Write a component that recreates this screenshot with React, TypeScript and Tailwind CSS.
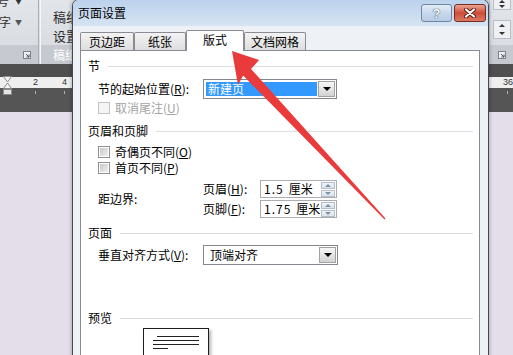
import React from "react";

function Accel({ k }: { k: string }) {
  return (
    <>
      (<span className="underline">{k}</span>)
    </>
  );
}

function Heading({ label, className = "" }: { label: string; className?: string }) {
  return (
    <div className={`flex items-center h-[14px] ${className}`}>
      <span className="leading-none">{label}</span>
      <div className="flex-1 h-px bg-[#dadee3] ml-[8px]" />
    </div>
  );
}

function Check({
  label,
  k,
  disabled = false,
  className = "",
}: {
  label: string;
  k: string;
  disabled?: boolean;
  className?: string;
}) {
  return (
    <div className={`flex items-center h-[14px] ml-[10px] ${className}`}>
      {disabled ? (
        <div className="w-[12px] h-[12px] border border-[#c4c4c4] bg-[#f5f5f5]" />
      ) : (
        <div className="w-[12px] h-[12px] border border-[#8e8f8f] p-px bg-white">
          <div className="w-full h-full bg-linear-to-br from-[#c8c8c8] to-[#f0f0f0]" />
        </div>
      )}
      <span className={`ml-[5px] leading-none ${disabled ? "text-[#a3a3a3]" : ""}`}>
        {label}
        <Accel k={k} />
      </span>
    </div>
  );
}

function Select({ value, selected = false, width }: { value: string; selected?: boolean; width: string }) {
  return (
    <div className={`${width} h-[20px] border border-[#828790] bg-white flex p-px`}>
      <div
        className={`flex-1 m-px flex items-center px-[2px] leading-none ${
          selected ? "bg-[#3399ff] text-white" : "pl-[4px]"
        }`}
      >
        {value}
      </div>
      <div className="w-[17px] h-full border border-[#a2a2a2] bg-linear-to-b from-[#f7f7f7] to-[#d3d3d3] flex items-center justify-center">
        <div className="w-0 h-0 border-l-[4px] border-r-[4px] border-t-[4px] border-l-transparent border-r-transparent border-t-black" />
      </div>
    </div>
  );
}

function SpinArrow({ up }: { up: boolean }) {
  return (
    <div className="flex-1 border border-[#b4bdc9] bg-linear-to-b from-[#f1f4f8] to-[#dce3ec] flex items-center justify-center">
      <div
        className={`w-0 h-0 border-l-[3px] border-r-[3px] border-l-transparent border-r-transparent ${
          up ? "border-b-[3px] border-b-[#7f8fa3]" : "border-t-[3px] border-t-[#7f8fa3]"
        }`}
      />
    </div>
  );
}

function Spin({ num, label, k }: { num: string; label: string; k: string }) {
  return (
    <div className="flex items-center h-[18px]">
      <span className="w-[57px] leading-none">
        {label}
        <Accel k={k} />:
      </span>
      <div className="w-[77px] h-[18px] border border-[#abadb3] bg-white flex items-center pl-[3px] pr-px">
        <span className="flex-1 leading-none">
          <span className="tracking-[1px]">{num}</span>
          <span className="ml-[5px]">厘米</span>
        </span>
        <div className="w-[14px] h-[15px] flex flex-col gap-px">
          <SpinArrow up />
          <SpinArrow up={false} />
        </div>
      </div>
    </div>
  );
}

function Launcher() {
  return (
    <svg width="8" height="8" viewBox="0 0 8 8">
      <rect x="0.5" y="0.5" width="7" height="7" fill="#eef0f2" stroke="#7d838b" />
      <path d="M3 3 L6 6 M6 3.5 V6 H3.5" stroke="#4b5057" fill="none" />
    </svg>
  );
}

function SpinControl({ className = "" }: { className?: string }) {
  return (
    <div
      className={`w-[18px] bg-[#eef0f3] border border-[#b9bec5] flex flex-col items-center justify-around ${className}`}
    >
      <div className="w-0 h-0 border-l-[3px] border-r-[3px] border-b-[3px] border-l-transparent border-r-transparent border-b-[#333]" />
      <div className="w-0 h-0 border-l-[3px] border-r-[3px] border-t-[3px] border-l-transparent border-r-transparent border-t-[#333]" />
    </div>
  );
}

function WordBackground() {
  return (
    <div className="absolute inset-0 flex flex-col">
      <div className="h-[64px] bg-linear-to-b from-[#e2e5e9] to-[#d6dae0] flex justify-between">
        <div className="flex">
          <div className="w-[38px] flex flex-col">
            <div className="flex-1 flex flex-col text-[#333] text-[12px] leading-[12px]">
              <div className="flex items-center -mt-[5px] -ml-[3px]">
                <span>号</span>
                <span className="ml-[6px] text-[7px]">▼</span>
              </div>
              <div className="flex items-center mt-[9px] -ml-[1px]">
                <span>字</span>
                <span className="ml-[4px] text-[7px] text-[#555]">▼</span>
              </div>
            </div>
            <div className="h-[19px] bg-[#c6cad0] flex items-center justify-end pr-[7px]">
              <Launcher />
            </div>
          </div>
          <div className="w-[3px] border-l border-[#a9aeb5] border-r border-r-[#f6f7f9]" />
          <div className="w-[40px] flex flex-col">
            <div className="flex-1 pl-[12px] pt-[7px] text-[13px] leading-[19px] text-[#2b2b2b]">
              稿纸
              <br />
              设置
            </div>
            <div className="h-[19px] bg-[#c6cad0] pl-[12px] flex items-center text-white text-[12px]">稿纸</div>
          </div>
        </div>
        <div className="w-[24px] flex flex-col items-center border-l border-[#c4c8ce]">
          <SpinControl className="h-[12px] -mt-[2px]" />
          <SpinControl className="h-[19px] mt-[10px]" />
          <div className="mt-auto h-[19px] w-full bg-[#c6cad0] flex items-center justify-center">
            <Launcher />
          </div>
        </div>
      </div>
      <div className="h-[13px] bg-[#4f4f4f]" />
      <div className="h-[11px] bg-[#efefef] relative flex items-center text-[9px] leading-none text-[#333] font-['Liberation_Sans',sans-serif]">
        <span className="ml-[33px]">2</span>
        <span className="ml-[24px]">4</span>
        <span className="ml-auto mr-0">36</span>
        <svg className="absolute left-[3px] top-[-1px]" width="9" height="20" viewBox="0 0 9 20">
          <path d="M0.5 0.5 H8.5 L4.5 6 Z" fill="#f5f5f5" stroke="#8a8a8a" />
          <path d="M4.5 7 L8.5 12.5 H0.5 Z" fill="#f5f5f5" stroke="#8a8a8a" />
          <rect x="0.5" y="13.5" width="8" height="5" fill="#e6e6e6" stroke="#8a8a8a" />
        </svg>
      </div>
      <div className="h-[24px] bg-[#555555] flex items-start">
        <span className="ml-[35px] mt-[3px] w-px h-[3px] bg-[#b0b0b0]" />
        <span className="ml-[28px] mt-[3px] w-px h-[3px] bg-[#b0b0b0]" />
        <span className="ml-auto mr-[5px] mt-[3px] w-px h-[3px] bg-[#b0b0b0]" />
      </div>
      <div className="flex-1 bg-[#e4deeb]" />
    </div>
  );
}

function TitleButtons() {
  return (
    <div className="flex gap-[2px]">
      <div className="w-[31px] h-[18px] rounded-[3px] border border-[#6f87a5] bg-linear-to-b from-[#e3ecf6] via-[#c9d9ec] to-[#b7cbe4] flex items-center justify-center">
        <span className="text-white font-bold text-[13px] leading-none font-['Liberation_Sans',sans-serif] [text-shadow:0_0_1px_#2d3d52,0_0_1px_#2d3d52]">
          ?
        </span>
      </div>
      <div className="w-[32px] h-[18px] rounded-[3px] border border-[#7a2b20] bg-linear-to-b from-[#eaa596] via-[#cd4c36] to-[#dc7a66] flex items-center justify-center">
        <svg width="14" height="10" viewBox="0 0 14 10">
          <path d="M3 1.5 L11 8.5 M11 1.5 L3 8.5" stroke="#5a1c14" strokeWidth="4" strokeLinecap="round" />
          <path d="M3 1.5 L11 8.5 M11 1.5 L3 8.5" stroke="#ffffff" strokeWidth="2.2" strokeLinecap="round" />
        </svg>
      </div>
    </div>
  );
}

function Tab({ label, width, active = false }: { label: string; width: string; active?: boolean }) {
  return active ? (
    <div
      className={`${width} h-[21px] -mb-px relative z-10 border border-b-0 border-[#898c95] rounded-t-[2px] bg-white flex items-center justify-center pb-[2px]`}
    >
      {label}
    </div>
  ) : (
    <div
      className={`${width} h-[18px] border border-b-0 border-[#898c95] rounded-t-[2px] bg-linear-to-b from-[#f3f3f3] to-[#dedede] flex items-center justify-center`}
    >
      {label}
    </div>
  );
}

function PageSetupDialog() {
  return (
    <div className="absolute left-[72px] top-[-1px] w-[417px] h-[372px] border border-[#3f4957] rounded-t-[7px] bg-[#eef2f6] flex flex-col shadow-[0_0_4px_rgba(0,0,0,0.35)] overflow-hidden">
      <div className="h-[26px] shrink-0 bg-linear-to-b from-[#bcd2ec] to-[#d6e4f3] flex items-center justify-between pl-[5px] pr-[2px]">
        <span className="text-[12px] leading-none text-black">页面设置</span>
        <TitleButtons />
      </div>
      <div className="flex-1 flex flex-col pl-[7px] pr-[8px]">
        <div className="h-[20px] mt-[4px] flex items-end">
          <Tab label="页边距" width="w-[54px]" />
          <Tab label="纸张" width="w-[52px]" />
          <Tab label="版式" width="w-[58px]" active />
          <Tab label="文档网格" width="w-[62px]" />
        </div>
        <div className="flex-1 border border-[#898c95] bg-white pl-[7px] pr-[6px] pt-[8px] flex flex-col text-black">
          <Heading label="节" />
          <div className="flex items-center h-[20px] mt-[6px] ml-[10px]">
            <span className="w-[105px] leading-none">
              节的起始位置<Accel k="R" />:
            </span>
            <Select value="新建页" selected width="w-[134px]" />
          </div>
          <Check label="取消尾注" k="U" disabled className="mt-[2px]" />

          <Heading label="页眉和页脚" className="mt-[9px]" />
          <Check label="奇偶页不同" k="O" className="mt-[7px]" />
          <Check label="首页不同" k="P" className="mt-[2px]" />
          <div className="flex items-center mt-[5px] ml-[10px]">
            <span className="w-[105px] leading-none">距边界:</span>
            <div className="flex flex-col gap-[2px]">
              <Spin label="页眉" k="H" num="1.5" />
              <Spin label="页脚" k="F" num="1.75" />
            </div>
          </div>

          <Heading label="页面" className="mt-[8px]" />
          <div className="flex items-center h-[20px] mt-[5px] ml-[10px]">
            <span className="w-[105px] leading-none">
              垂直对齐方式<Accel k="V" />:
            </span>
            <Select value="顶端对齐" width="w-[135px]" />
          </div>

          <Heading label="预览" className="mt-[46px]" />
          <div className="ml-[55px] mt-[3px] w-[66px] h-[60px] border border-[#1e1e1e] bg-white shadow-[2px_2px_3px_rgba(0,0,0,0.3)] pt-[7px] pl-[9px] flex flex-col gap-[3px]">
            <div className="ml-[4px] w-[42px] h-px bg-[#222]" />
            <div className="w-[46px] h-px bg-[#222]" />
            <div className="w-[46px] h-px bg-[#222]" />
            <div className="w-[15px] h-px bg-[#222]" />
          </div>
        </div>
      </div>
    </div>
  );
}

function RedArrow() {
  return (
    <svg className="absolute inset-0 pointer-events-none" width="513" height="355" viewBox="0 0 513 355">
      <polygon
        points="232,51 259,60 251,69 385.5,218.5 384.5,219.5 243.2,75.6 238,85"
        fill="#e93a3c"
      />
    </svg>
  );
}

export default function App() {
  return (
    <div className="relative w-[513px] h-[355px] overflow-hidden text-[12px] font-['Noto_Sans_CJK_SC','Noto_Sans',sans-serif]">
      <WordBackground />
      <PageSetupDialog />
      <RedArrow />
    </div>
  );
}
